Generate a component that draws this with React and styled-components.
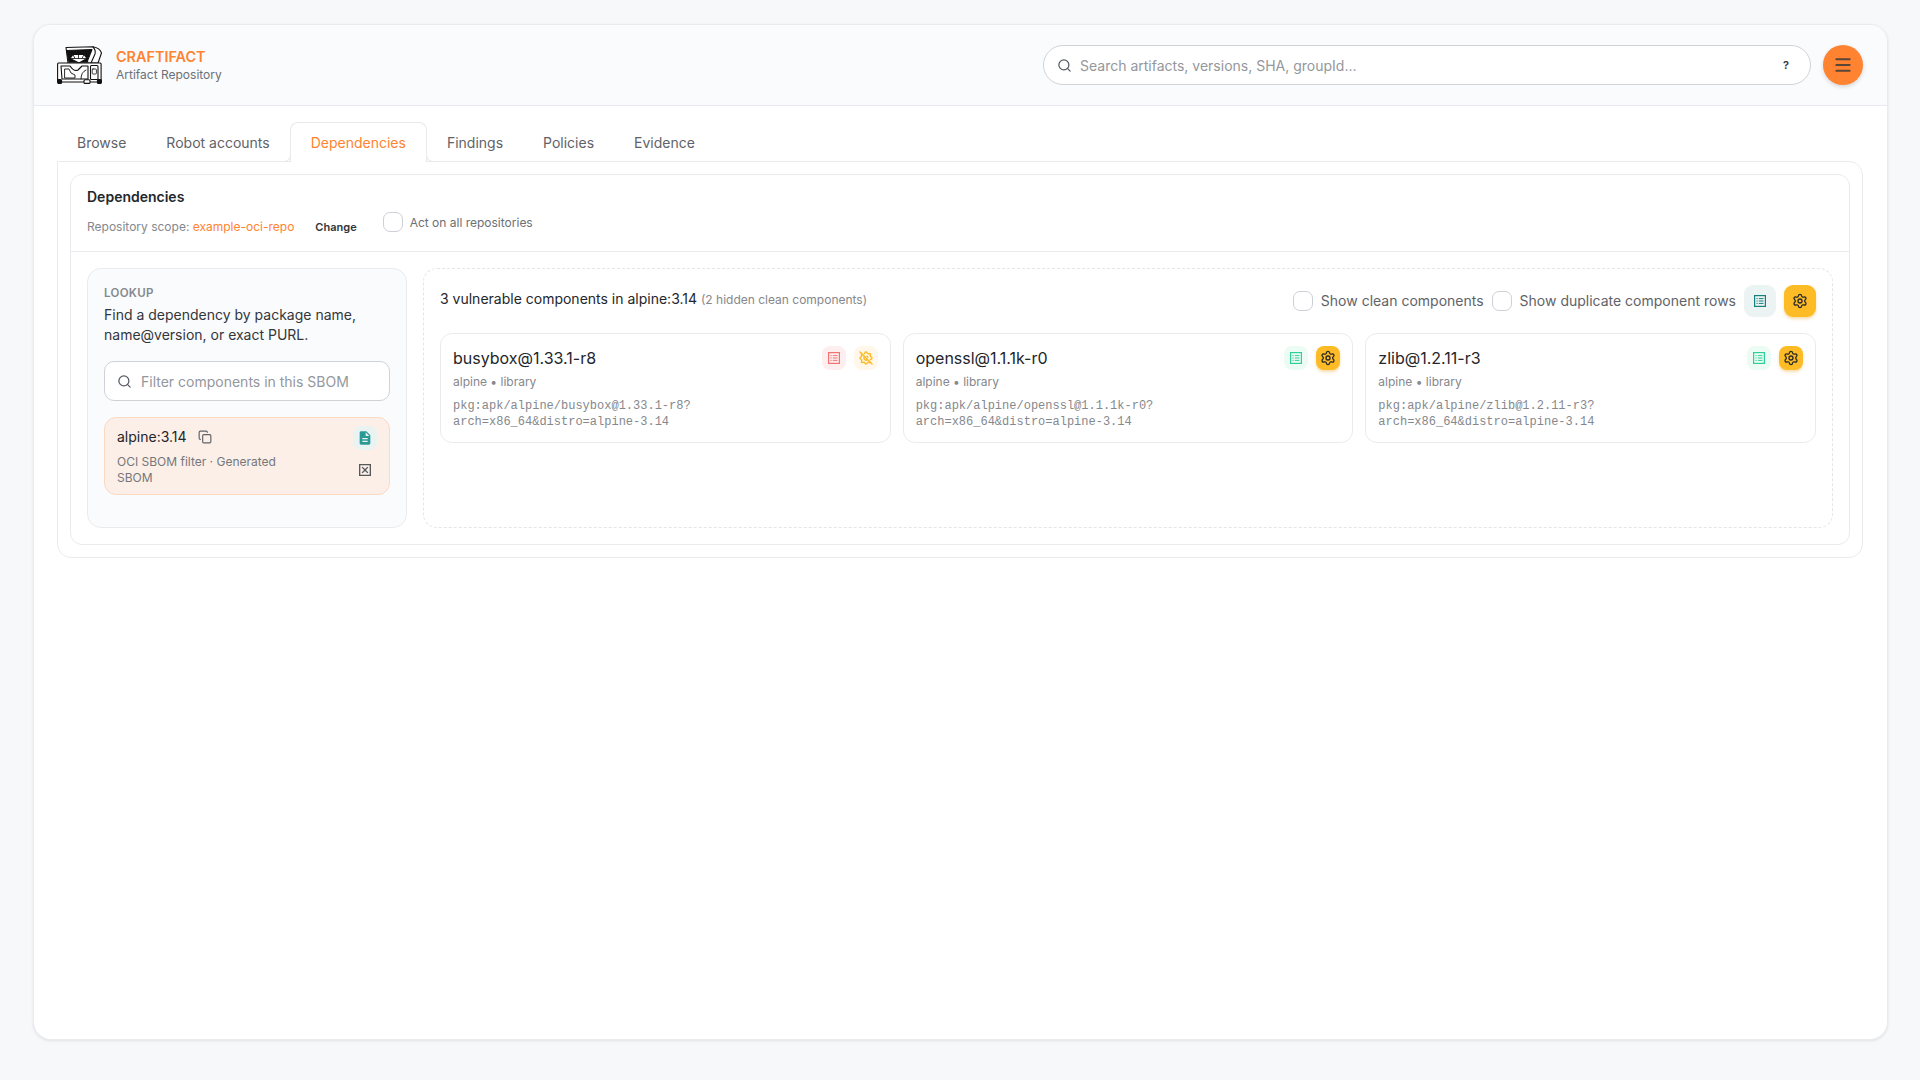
import styled, { createGlobalStyle } from "styled-components"
import { Search, Menu, Copy, Settings } from "lucide-react"
import { MdDescription, MdOutlineDisabledByDefault } from "react-icons/md"
import { TbSettingsOff } from "react-icons/tb"

const GlobalStyle = createGlobalStyle`
html, body {
    margin: 0;
    padding: 0;
    background: #f7f8fa;
    font-family: Inter, "Noto Sans", sans-serif;
    color: #23262b;
}
* { box-sizing: border-box; }
`

const COMPONENTS = [
    { name: "busybox@1.33.1-r8", purl: ["pkg:apk/alpine/busybox@1.33.1-r8?", "arch=x86_64&distro=alpine-3.14"], bad: true },
    { name: "openssl@1.1.1k-r0", purl: ["pkg:apk/alpine/openssl@1.1.1k-r0?", "arch=x86_64&distro=alpine-3.14"] },
    { name: "zlib@1.2.11-r3", purl: ["pkg:apk/alpine/zlib@1.2.11-r3?", "arch=x86_64&distro=alpine-3.14"] },
]

const TABS = ["Browse", "Robot accounts", "Dependencies", "Findings", "Policies", "Evidence"]

function Logo() {
    return (
        <svg width="45" height="38" viewBox="0 0 45 38" fill="none" stroke="#111" strokeWidth="1.1" strokeLinejoin="round" strokeLinecap="round">
            <path d="M9 1.5 L36 0.7 Q43 2 44.5 7 L41 17 L11 17 Z" fill="#fff" />
            <path d="M9.5 4.5 L35 3.5 L30 16 L31 16 L12 16 Z" fill="#111" />
            <path d="M36 1 Q39 4 38 8 L34 17" />
            <path d="M13 12.5 L16 8.5 L27 8.5 L30 12.5 L22 17 Z" fill="#fff" />
            <path d="M16 8.5 L18 12.5 M21.5 8.5 L21.5 12.5 M27 8.5 L25 12.5 M13 12.5 L30 12.5" strokeWidth="0.8" />
            <rect x="0.6" y="17" width="43.5" height="19" rx="1" fill="#fff" />
            <path d="M4 20 L13 20 Q17 26 21 24 L25 20 L31 20 L31 33 L5 33 Z" />
            <path d="M8 23 L12 23 Q13 28 18 29 L18 32 L8 32 Z M24 33 Q24 26 29 24" strokeWidth="0.9" />
            <rect x="33.5" y="19.5" width="7.5" height="14" rx="1" />
            <rect x="35.2" y="23" width="4.2" height="5" rx="0.8" strokeWidth="0.8" />
            <rect x="0.6" y="33.5" width="4" height="4" rx="1.2" fill="#111" />
            <rect x="27" y="33.8" width="6" height="3.6" rx="1" fill="#fff" />
            <rect x="40.4" y="33.5" width="4" height="4" rx="1.2" fill="#111" />
        </svg>
    )
}

function IconeLista() {
    return (
        <svg width="12" height="12" viewBox="0 0 12 12" fill="none" stroke="currentColor" strokeWidth="1.2">
            <rect x="0.6" y="0.6" width="10.8" height="10.8" />
            <path d="M2.5 3.6 L3.7 3.6 M2.5 6 L3.7 6 M2.5 8.4 L3.7 8.4 M4.8 3.6 L9.5 3.6 M4.8 6 L9.5 6 M4.8 8.4 L9.5 8.4" strokeWidth="1" />
        </svg>
    )
}

export default function App() {
    return (
        <>
            <GlobalStyle />
            <Pagina>
                <Cartao>
                    <Topo>
                        <Marca>
                            <Logo />
                            <MarcaTexto>
                                <MarcaNome>CRAFTIFACT</MarcaNome>
                                <MarcaSub>Artifact Repository</MarcaSub>
                            </MarcaTexto>
                        </Marca>
                        <TopoDireita>
                            <BuscaGrande>
                                <Search size={15} color="#555a62" strokeWidth={2} />
                                <BuscaTexto>Search artifacts, versions, SHA, groupId...</BuscaTexto>
                                <Ajuda>?</Ajuda>
                            </BuscaGrande>
                            <BotaoMenu><Menu size={20} color="#5a4638" strokeWidth={2.4} /></BotaoMenu>
                        </TopoDireita>
                    </Topo>
                    <Corpo>
                        <Abas>
                            {TABS.map(t => <Aba key={t} $ativa={t === "Dependencies"}>{t}</Aba>)}
                        </Abas>
                        <PainelExterno>
                            <PainelInterno>
                                <Cabecalho>
                                    <Titulo>Dependencies</Titulo>
                                    <Escopo>
                                        <EscopoTexto>Repository scope: <Laranja>example-oci-repo</Laranja></EscopoTexto>
                                        <Trocar>Change</Trocar>
                                        <Opcao>
                                            <Caixa />
                                            <OpcaoPequena>Act on all repositories</OpcaoPequena>
                                        </Opcao>
                                    </Escopo>
                                </Cabecalho>
                                <Colunas>
                                    <Lateral>
                                        <Rotulo>LOOKUP</Rotulo>
                                        <Ajuda2>Find a dependency by package name, name@version, or exact PURL.</Ajuda2>
                                        <Filtro>
                                            <Search size={15} color="#555a62" strokeWidth={2} />
                                            <span>Filter components in this SBOM</span>
                                        </Filtro>
                                        <ItemSbom>
                                            <ItemTexto>
                                                <ItemNome>
                                                    alpine:3.14
                                                    <Copy size={14} color="#5f6368" strokeWidth={2} />
                                                </ItemNome>
                                                <ItemDesc>OCI SBOM filter · Generated SBOM</ItemDesc>
                                            </ItemTexto>
                                            <ItemAcoes>
                                                <IconeBotao $size={24} $fundo="#e8f3f2" $cor="#2b9a97"><MdDescription size={16} /></IconeBotao>
                                                <IconeBotao $size={24} $cor="#55585d"><MdOutlineDisabledByDefault size={16} /></IconeBotao>
                                            </ItemAcoes>
                                        </ItemSbom>
                                    </Lateral>
                                    <Resultados>
                                        <ResultadosTopo>
                                            <Resumo>
                                                3 vulnerable components in alpine:3.14 <Oculto>(2 hidden clean components)</Oculto>
                                            </Resumo>
                                            <Filtros>
                                                <OpcaoGrande><Caixa /><OpcaoRotulo>Show clean components</OpcaoRotulo></OpcaoGrande>
                                                <OpcaoGrande><Caixa /><OpcaoRotulo>Show duplicate component rows</OpcaoRotulo></OpcaoGrande>
                                                <IconeBotao $size={32} $radius={9} $fundo="#ebf4f3" $cor="#17807f"><IconeLista /></IconeBotao>
                                                <IconeBotao $size={32} $radius={9} $fundo="#fdbb25" $cor="#2a2a2a" $sombra><Settings size={16} strokeWidth={2} /></IconeBotao>
                                            </Filtros>
                                        </ResultadosTopo>
                                        <Grade>
                                            {COMPONENTS.map(c => (
                                                <Componente key={c.name}>
                                                    <ComponenteTopo>
                                                        <ComponenteNome>{c.name}</ComponenteNome>
                                                        <ComponenteAcoes>
                                                            {c.bad
                                                                ? <IconeBotao $size={24} $fundo="#fdeff0" $cor="#f6716f"><IconeLista /></IconeBotao>
                                                                : <IconeBotao $size={24} $fundo="#edfbf5" $cor="#2fcf9c"><IconeLista /></IconeBotao>}
                                                            {c.bad
                                                                ? <IconeBotao $size={24} $fundo="#fff8ea" $cor="#fbbb27"><TbSettingsOff size={16} strokeWidth={2.2} /></IconeBotao>
                                                                : <IconeBotao $size={24} $fundo="#fdbb25" $cor="#2a2a2a" $sombra><Settings size={16} strokeWidth={2} /></IconeBotao>}
                                                        </ComponenteAcoes>
                                                    </ComponenteTopo>
                                                    <ComponenteTipo>alpine • library</ComponenteTipo>
                                                    <Purl>{c.purl[0]}<br />{c.purl[1]}</Purl>
                                                </Componente>
                                            ))}
                                        </Grade>
                                    </Resultados>
                                </Colunas>
                            </PainelInterno>
                        </PainelExterno>
                    </Corpo>
                </Cartao>
            </Pagina>
        </>
    )
}

const Pagina = styled.div`
width: 100%;
height: 1080px;
padding: 24px 32px 40px 33px;
`
const Cartao = styled.div`
height: 100%;
background: white;
border: 1px solid #e9ebee;
border-radius: 18px;
box-shadow: 0 1px 3px rgba(20, 25, 35, 0.1);
overflow: hidden;
`
const Topo = styled.header`
height: 81px;
background: #fafbfd;
border-bottom: 1px solid #e8eaed;
display: flex;
align-items: center;
justify-content: space-between;
padding: 0 24px 0 23px;
`
const Marca = styled.div`
display: flex;
align-items: center;
gap: 14px;
`
const MarcaTexto = styled.div`
display: flex;
flex-direction: column;
gap: 1px;
`
const MarcaNome = styled.div`
color: #ff8330;
font-size: 14.4px;
font-weight: 600;
line-height: 18px;
`
const MarcaSub = styled.div`
color: #6c7076;
font-size: 12px;
line-height: 15px;
`
const TopoDireita = styled.div`
display: flex;
align-items: center;
gap: 12px;
`
const BuscaGrande = styled.div`
width: 768px;
height: 40px;
background: white;
border: 1px solid #cfd2d7;
border-radius: 20px;
display: flex;
align-items: center;
gap: 8px;
padding: 0 20px 0 13px;
`
const BuscaTexto = styled.span`
flex: 1;
color: #94979c;
font-size: 14px;
`
const Ajuda = styled.span`
color: #33363b;
font-size: 11px;
font-weight: 600;
margin-right: 1px;
`
const BotaoMenu = styled.div`
width: 40px;
height: 40px;
border-radius: 50%;
background: #ff8330;
box-shadow: 0 2px 4px rgba(0, 0, 0, 0.15);
display: flex;
align-items: center;
justify-content: center;
`
const Corpo = styled.div`
padding: 16px 24px 0 23px;
`
const Abas = styled.nav`
display: flex;
height: 40px;
position: relative;
z-index: 1;
margin-bottom: -1px;
`
const Aba = styled.div`
position: relative;
padding: 0 ${props => props.$ativa ? "20px" : "19px"};
display: flex;
align-items: center;
font-size: 14px;
color: ${props => props.$ativa ? "#ff8330" : "#5f6368"};
background: ${props => props.$ativa ? "white" : "transparent"};
border: 1px solid ${props => props.$ativa ? "#e7e9ec" : "transparent"};
border-bottom: none;
border-radius: 8px 8px 0 0;

&::before, &::after {
    content: "";
    display: ${props => props.$ativa ? "block" : "none"};
    position: absolute;
    bottom: 0;
    width: 7px;
    height: 7px;
    background: white;
    border-bottom: 1px solid #e7e9ec;
}
&::before {
    left: -8px;
    border-right: 1px solid #e7e9ec;
    border-bottom-right-radius: 7px;
}
&::after {
    right: -8px;
    border-left: 1px solid #e7e9ec;
    border-bottom-left-radius: 7px;
}
`
const PainelExterno = styled.div`
border: 1px solid #e9ebee;
border-radius: 0 14px 14px 14px;
padding: 12px;
`
const PainelInterno = styled.div`
border: 1px solid #e9ebee;
border-radius: 12px;
`
const Cabecalho = styled.div`
height: 77px;
border-bottom: 1px solid #e9ebee;
padding: 13px 16px 0;
`
const Titulo = styled.div`
font-size: 14px;
font-weight: 600;
line-height: 17px;
color: #23262b;
`
const Escopo = styled.div`
display: flex;
align-items: center;
margin-top: 10px;
`
const EscopoTexto = styled.div`
font-size: 12px;
color: #85888d;
margin-top: 4px;
`
const Laranja = styled.span`
color: #ff8330;
`
const Trocar = styled.div`
font-size: 11px;
font-weight: 600;
color: #303338;
margin: 4px 26px 0 21px;
`
const Opcao = styled.label`
display: flex;
align-items: center;
gap: 7px;
margin-top: -5px;
`
const OpcaoPequena = styled.span`
font-size: 12px;
color: #6c7076;
`
const Caixa = styled.span`
width: 20px;
height: 20px;
background: white;
border: 1px solid #cdd0d5;
border-radius: 7px;
flex-shrink: 0;
`
const Colunas = styled.div`
display: flex;
gap: 16px;
padding: 16px;
`
const Lateral = styled.aside`
width: 320px;
height: 260px;
flex-shrink: 0;
background: #fafbfd;
border: 1px solid #e9ebee;
border-radius: 14px;
padding: 17px 16px 16px;
`
const Rotulo = styled.div`
font-size: 11.52px;
font-weight: 600;
color: #85888d;
line-height: 15px;
letter-spacing: 0.3px;
`
const Ajuda2 = styled.div`
font-size: 14px;
line-height: 20px;
color: #33363b;
margin-top: 4px;
`
const Filtro = styled.div`
height: 40px;
background: white;
border: 1px solid #cfd2d7;
border-radius: 10px;
display: flex;
align-items: center;
gap: 9px;
padding: 0 12px;
margin-top: 16px;
color: #94979c;
font-size: 14px;
`
const ItemSbom = styled.div`
height: 78px;
background: #fcefe7;
border: 1px solid #fcd9c2;
border-radius: 12px;
display: flex;
justify-content: space-between;
padding: 8px 12px;
margin-top: 16px;
`
const ItemTexto = styled.div`
width: 170px;
`
const ItemNome = styled.div`
display: flex;
align-items: center;
gap: 11px;
font-size: 14px;
line-height: 20px;
color: #23262b;
margin-top: 1px;
`
const ItemDesc = styled.div`
font-size: 12px;
line-height: 16px;
color: #74777c;
margin-top: 7px;
`
const ItemAcoes = styled.div`
display: flex;
flex-direction: column;
align-items: center;
gap: 8px;
`
const IconeBotao = styled.span`
width: ${props => props.$size}px;
height: ${props => props.$size}px;
flex-shrink: 0;
border-radius: ${props => props.$radius || 8}px;
background: ${props => props.$fundo || "transparent"};
color: ${props => props.$cor};
box-shadow: ${props => props.$sombra ? "0 2px 3px rgba(230, 160, 20, 0.35)" : "none"};
display: flex;
align-items: center;
justify-content: center;
`
const Resultados = styled.section`
flex: 1;
height: 260px;
border: 1px dashed #e3e5e9;
border-radius: 14px;
padding: 16px;
`
const ResultadosTopo = styled.div`
display: flex;
align-items: center;
justify-content: space-between;
height: 32px;
margin-bottom: 16px;
`
const Resumo = styled.div`
font-size: 14px;
color: #23262b;
margin-top: -6px;
`
const Oculto = styled.span`
font-size: 12px;
color: #85888d;
`
const Filtros = styled.div`
display: flex;
align-items: center;
gap: 8px;
`
const OpcaoGrande = styled.label`
display: flex;
align-items: center;
gap: 8px;
font-size: 14px;
color: #5f6368;
`
const OpcaoRotulo = styled.span`
margin-top: -2px;
`
const Grade = styled.div`
display: grid;
grid-template-columns: repeat(3, 1fr);
gap: 12px;
`
const Componente = styled.div`
height: 110px;
border: 1px solid #e9ebee;
border-radius: 12px;
padding: 12px;
`
const ComponenteTopo = styled.div`
display: flex;
justify-content: space-between;
align-items: center;
height: 24px;
`
const ComponenteNome = styled.div`
font-size: 16px;
color: #23262b;
`
const ComponenteAcoes = styled.div`
display: flex;
gap: 8px;
`
const ComponenteTipo = styled.div`
font-size: 12px;
line-height: 16px;
color: #85888d;
margin-top: 4px;
`
const Purl = styled.div`
font-family: "Liberation Mono", monospace;
font-size: 12px;
line-height: 16px;
color: #85888d;
margin-top: 8px;
`
